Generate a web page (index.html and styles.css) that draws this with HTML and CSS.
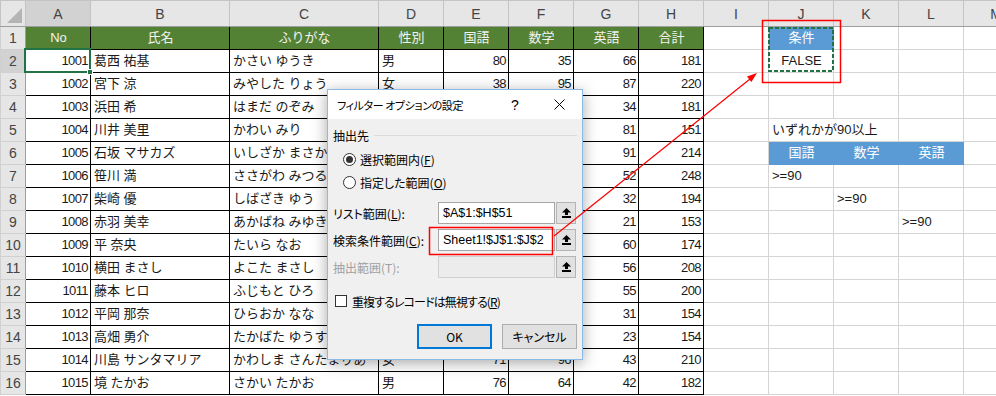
FILE: index.html
```html
<!DOCTYPE html>
<html>
	<head>
		<meta charset="utf-8">
		<title>フィルター オプションの設定</title>
		<link rel="stylesheet" href="styles.css">
	</head>
	<body>
		<table class=sheet>
			<colgroup>
				<col class=rh><col class=ca><col class=cb><col class=cc>
				<col><col><col><col><col><col><col><col><col><col>
			</colgroup>
			<thead>
				<tr><th class=corner><div class=tri></div></th><th class=sel>A</th><th>B</th><th>C</th><th>D</th><th>E</th><th>F</th><th>G</th><th>H</th><th>I</th><th>J</th><th>K</th><th>L</th><th>M</th></tr>
			</thead>
			<tbody>
				<tr class=hdr><th>1</th><td>No</td><td>氏名</td><td>ふりがな</td><td>性別</td><td>国語</td><td>数学</td><td>英語</td><td>合計</td><td></td><td class="blue c">条件</td><td></td><td></td><td></td></tr>
				<tr><th class=sel>2</th><td>1001</td><td>葛西 祐基</td><td>かさい ゆうき</td><td>男</td><td>80</td><td>35</td><td>66</td><td>181</td><td></td><td class=c>FALSE</td><td></td><td></td><td></td></tr>
				<tr><th>3</th><td>1002</td><td>宮下 涼</td><td>みやした りょう</td><td>女</td><td>38</td><td>95</td><td>87</td><td>220</td><td></td><td></td><td></td><td></td><td></td></tr>
				<tr><th>4</th><td>1003</td><td>浜田 希</td><td>はまだ のぞみ</td><td></td><td></td><td></td><td>34</td><td>181</td><td></td><td></td><td></td><td></td><td></td></tr>
				<tr><th>5</th><td>1004</td><td>川井 美里</td><td>かわい みり</td><td></td><td></td><td></td><td>81</td><td>151</td><td></td><td class=over>いずれかが90以上</td><td></td><td></td><td></td></tr>
				<tr><th>6</th><td>1005</td><td>石坂 マサカズ</td><td>いしざか まさかず</td><td></td><td></td><td></td><td>91</td><td>214</td><td></td><td class="blue c">国語</td><td class="blue c">数学</td><td class="blue c">英語</td><td></td></tr>
				<tr><th>7</th><td>1006</td><td>笹川 満</td><td>ささがわ みつる</td><td></td><td></td><td></td><td>52</td><td>248</td><td></td><td>&gt;=90</td><td></td><td></td><td></td></tr>
				<tr><th>8</th><td>1007</td><td>柴崎 優</td><td>しばざき ゆう</td><td></td><td></td><td></td><td>32</td><td>194</td><td></td><td></td><td>&gt;=90</td><td></td><td></td></tr>
				<tr><th>9</th><td>1008</td><td>赤羽 美幸</td><td>あかばね みゆき</td><td></td><td></td><td></td><td>21</td><td>153</td><td></td><td></td><td></td><td>&gt;=90</td><td></td></tr>
				<tr><th>10</th><td>1009</td><td>平 奈央</td><td>たいら なお</td><td></td><td></td><td></td><td>60</td><td>174</td><td></td><td></td><td></td><td></td><td></td></tr>
				<tr><th>11</th><td>1010</td><td>横田 まさし</td><td>よこた まさし</td><td></td><td></td><td></td><td>56</td><td>208</td><td></td><td></td><td></td><td></td><td></td></tr>
				<tr><th>12</th><td>1011</td><td>藤本 ヒロ</td><td>ふじもと ひろ</td><td></td><td></td><td></td><td>55</td><td>200</td><td></td><td></td><td></td><td></td><td></td></tr>
				<tr><th>13</th><td>1012</td><td>平岡 那奈</td><td>ひらおか なな</td><td></td><td></td><td></td><td>31</td><td>154</td><td></td><td></td><td></td><td></td><td></td></tr>
				<tr><th>14</th><td>1013</td><td>高畑 勇介</td><td>たかばた ゆうすけ</td><td></td><td></td><td></td><td>23</td><td>154</td><td></td><td></td><td></td><td></td><td></td></tr>
				<tr><th>15</th><td>1014</td><td>川島 サンタマリア</td><td>かわしま さんたまりあ</td><td>女</td><td>71</td><td>96</td><td>43</td><td>210</td><td></td><td></td><td></td><td></td><td></td></tr>
				<tr><th>16</th><td>1015</td><td>境 たかお</td><td>さかい たかお</td><td>男</td><td>76</td><td>64</td><td>42</td><td>182</td><td></td><td></td><td></td><td></td><td></td></tr>
			</tbody>
		</table>

		<div class=dialog>
			<div class=dlg-title>
				<span class=dlg-caption>フィルター オプションの設定</span>
				<span class=dlg-help>?</span>
				<span class=dlg-close>
					<svg width="11" height="11" viewBox="0 0 11 11"><path d="M0.5 0.5L10.5 10.5M10.5 0.5L0.5 10.5" stroke="#000" stroke-width="1" fill="none"/></svg>
				</span>
			</div>
			<div class=dlg-body>
				<div class=group><span>抽出先</span><span class=rule></span></div>
				<div class=radio><span class="dot on"></span><span>選択範囲内(<u>F</u>)</span></div>
				<div class=radio><span class=dot></span><span>指定した範囲(<u>O</u>)</span></div>
				<div class="field first">
					<span class=lbl>リスト範囲(<u>L</u>):</span>
					<span class=box>$A$1:$H$51</span>
					<span class=ref><svg width="9" height="10" viewBox="0 0 9 10"><path d="M4.5 0L9 4.5H6V7H3V4.5H0Z" fill="#000"/><rect x="0" y="8" width="9" height="2" fill="#000"/></svg></span>
				</div>
				<div class=field>
					<span class=lbl>検索条件範囲(<u>C</u>):</span>
					<span class=box>Sheet1!$J$1:$J$2</span>
					<span class=ref><svg width="9" height="10" viewBox="0 0 9 10"><path d="M4.5 0L9 4.5H6V7H3V4.5H0Z" fill="#000"/><rect x="0" y="8" width="9" height="2" fill="#000"/></svg></span>
				</div>
				<div class="field off">
					<span class=lbl>抽出範囲(T):</span>
					<span class=box></span>
					<span class=ref><svg width="9" height="10" viewBox="0 0 9 10"><path d="M4.5 0L9 4.5H6V7H3V4.5H0Z" fill="#000"/><rect x="0" y="8" width="9" height="2" fill="#000"/></svg></span>
				</div>
				<div class=check><span class=cbox></span><span class=check-text>重複するレコードは無視する(<u>R</u>)</span></div>
				<div class=buttons>
					<button class="btn ok">OK</button>
					<button class=btn>キャンセル</button>
				</div>
			</div>
		</div>

		<svg class=marks width="996" height="396">
			<rect x="25" y="49" width="65" height="23" fill="none" stroke="#217346" stroke-width="2"/>
			<rect x="87.5" y="69.5" width="5" height="5" fill="#217346" stroke="#fff" stroke-width="1"/>
			<rect x="769" y="28" width="64" height="43" fill="none" stroke="#217346" stroke-width="2" stroke-dasharray="4 2"/>
			<rect x="762.5" y="20.5" width="78" height="62" fill="none" stroke="#f00" stroke-width="1.5"/>
			<rect x="429.5" y="227.5" width="123" height="27" fill="none" stroke="#f00" stroke-width="1.5"/>
			<line x1="554" y1="236" x2="750" y2="79" stroke="#f00" stroke-width="1.2"/>
			<polygon points="757,73 751.4,82 747,76.5" fill="#f00"/>
		</svg>
	</body>
</html>
```

FILE: styles.css
```css
body {
	margin: 0;
	width: 996px;
	height: 396px;
	overflow: hidden;
	position: relative;
	background-color: #fff;
	font-family: "Liberation Sans", "Noto Sans CJK JP", sans-serif;
}

/* spreadsheet */

.sheet {
	border-collapse: collapse;
	table-layout: fixed;
	width: 1028px;
	font-size: 13px;
	color: #1a1a1a;
}

.sheet col {
	width: 65px;
}

.sheet col.rh {
	width: 25px;
}

.sheet col.cb {
	width: 139px;
}

.sheet col.cc {
	width: 149px;
}

.sheet thead tr {
	height: 26px;
}

.sheet tbody tr {
	height: 23px;
}

.sheet th {
	background-color: #e6e6e6;
	color: #444;
	font-weight: normal;
	font-size: 14px;
	padding: 0;
	border: 1px solid #c4c4c4;
	border-bottom-color: #9e9e9e;
}

.sheet tbody th {
	border-color: #d0d0d0;
	border-right-color: #9e9e9e;
}

.sheet th.sel {
	background-color: #d2d2d2;
}

.sheet th.corner {
	vertical-align: bottom;
}

.tri {
	width: 0;
	height: 0;
	border-left: 15px solid transparent;
	border-bottom: 15px solid #b4b4b4;
	margin: 0 3px 3px auto;
}

.sheet td {
	border: 1px solid #d4d4d4;
	padding: 0 2px 0 3px;
	white-space: nowrap;
	overflow: hidden;
	line-height: 20px;
	vertical-align: middle;
}

.sheet tbody td:nth-child(-n+9) {
	border-color: #000;
}

.sheet tbody td:nth-child(2),
.sheet tbody td:nth-child(n+6):nth-child(-n+9) {
	text-align: right;
	letter-spacing: -0.6px;
}

.sheet tr.hdr td:nth-child(-n+9) {
	background-color: #548235;
	color: #f2f2f2;
	text-align: center;
	letter-spacing: 0;
}

.sheet td.c {
	text-align: center;
}

.sheet td.blue {
	background-color: #5b9bd5;
	border-color: #5b9bd5;
	color: #fff;
}

.sheet td.over {
	overflow: visible;
	border-right-style: hidden;
}

/* dialog */

.dialog {
	position: absolute;
	left: 327px;
	top: 89px;
	width: 256px;
	height: 271px;
	box-sizing: border-box;
	border: 1px solid #8bb9e8;
	background-color: #f0f0f0;
	box-shadow: 0 3px 14px rgba(0, 0, 0, 0.35);
	font-family: "Noto Sans CJK JP", sans-serif;
	font-size: 12px;
	font-feature-settings: "palt";
	color: #000;
}

.dlg-title {
	display: flex;
	align-items: center;
	height: 29px;
	background-color: #fff;
}

.dlg-caption {
	flex: 1;
	padding-left: 9px;
	font-size: 11px;
	letter-spacing: -0.4px;
}

.dlg-help {
	width: 42px;
	text-align: center;
	font-family: "Liberation Sans", sans-serif;
	font-size: 14px;
}

.dlg-close {
	width: 46px;
	display: flex;
	justify-content: center;
}

.dlg-body {
	padding: 8px 5px 0 5px;
}

.group {
	display: flex;
	align-items: center;
	height: 16px;
}

.rule {
	flex: 1;
	height: 1px;
	margin-left: 5px;
	background-color: #dcdcdc;
}

.radio, .check {
	display: flex;
	align-items: center;
	gap: 4px;
	height: 16px;
	margin: 8px 0 0 10px;
}

.radio + .radio {
	margin-top: 7px;
}

.dot {
	width: 13px;
	height: 13px;
	box-sizing: border-box;
	border: 1px solid #333;
	border-radius: 50%;
	background-color: #fff;
	display: flex;
	align-items: center;
	justify-content: center;
}

.dot.on::after {
	content: "";
	width: 7px;
	height: 7px;
	border-radius: 50%;
	background-color: #333;
}

.field {
	display: flex;
	align-items: center;
	height: 22px;
	margin-top: 5px;
}

.field.first {
	margin-top: 12px;
}

.lbl {
	width: 105px;
}

.box {
	width: 117px;
	height: 22px;
	box-sizing: border-box;
	border: 1px solid #a6a6a6;
	background-color: #fff;
	padding-left: 4px;
	font-family: "Liberation Sans", sans-serif;
	font-size: 12.5px;
	line-height: 20px;
}

.ref {
	width: 20px;
	height: 22px;
	margin-left: 1px;
	box-sizing: border-box;
	border: 1px solid #b4b4b4;
	background-color: #e1e1e1;
	display: flex;
	align-items: center;
	justify-content: center;
}

.field.off .lbl {
	color: #a0a0a0;
}

.field.off .box {
	background-color: #ececec;
	border-color: #d0d0d0;
}

.check {
	gap: 5px;
	margin: 15px 0 0 2px;
}

.check-text {
	letter-spacing: -0.9px;
}

.cbox {
	width: 12px;
	height: 12px;
	box-sizing: border-box;
	border: 1px solid #333;
	background-color: #fff;
}

.buttons {
	display: flex;
	justify-content: flex-end;
	gap: 10px;
	margin-top: 15px;
}

.btn {
	width: 75px;
	height: 25px;
	box-sizing: border-box;
	border: 1px solid #adadad;
	background-color: #e1e1e1;
	padding: 0;
	font: inherit;
	color: #000;
}

.btn.ok {
	border: 2px solid #0078d7;
}

.marks {
	position: absolute;
	left: 0;
	top: 0;
	pointer-events: none;
}
```
